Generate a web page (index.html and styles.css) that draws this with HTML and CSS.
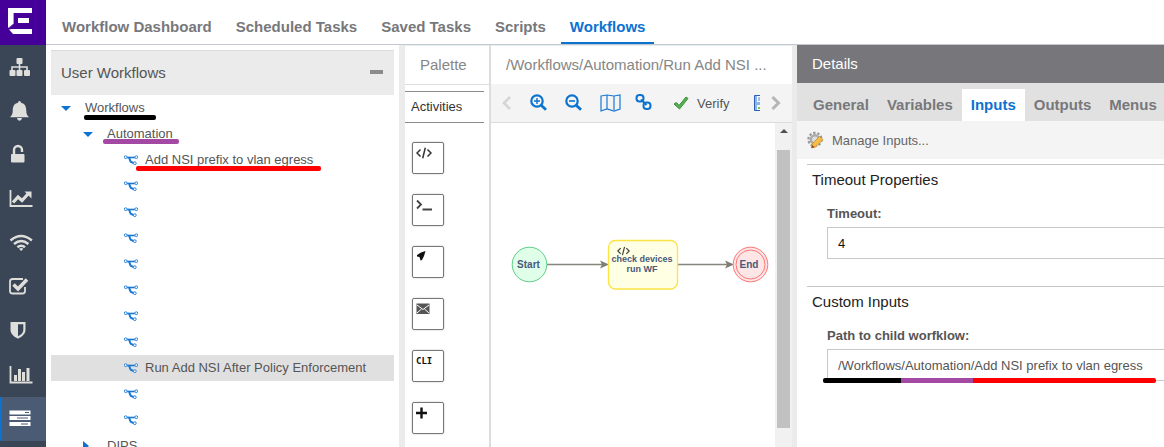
FILE: index.html
```html
<!DOCTYPE html>
<html lang="en">
<head>
<meta charset="utf-8">
<title>Workflows</title>
<link rel="stylesheet" href="styles.css">
</head>
<body>
<svg class="defs" aria-hidden="true">
  <symbol id="flow" viewBox="0 0 14 10">
    <g fill="none" stroke="#1a78d2">
      <path d="M3 2.500h8" stroke-width="1.600"/>
      <path d="M4.600 2.500C6 3 5.500 5.500 7 7L9.500 8" stroke-width="2"/>
      <circle cx="1.700" cy="2.200" r="1.400" fill="#fff" stroke-width=".9"/>
      <circle cx="12.300" cy="2.200" r="1.400" fill="#fff" stroke-width=".9"/>
      <circle cx="10.800" cy="8.200" r="1.400" fill="#fff" stroke-width=".9"/>
    </g>
  </symbol>
  <symbol id="code" viewBox="0 0 16 12">
    <path d="M4.500 2.500 1 6l3.500 3.500M11.500 2.500 15 6l-3.500 3.500M9.300.8 6.700 11.200" fill="none" stroke="currentColor" stroke-width="1.500"/>
  </symbol>
</svg>
<div class="app">
  <nav class="rail" aria-label="Main">
    <a class="logo" href="#" aria-label="Home">
      <svg width="46" height="45" viewBox="0 0 46 45"><path fill="#fff" d="M8 8h24v5H13v11l-5 4zM18 18h11v5H18zM9 29.500 12 29h20v5H13z"/><path fill="#b79bdc" d="M13 13h1v10.500l-4.500 4.500H9l4-4z"/></svg>
    </a>
    <a class="rail-item" href="#" aria-label="Network"><svg width="24" height="24" viewBox="0 0 24 24"><g fill="#dededb"><rect x="7.500" y="3" width="6" height="6" rx="1"/><rect x=".5" y="15" width="6" height="6" rx="1"/><rect x="7.500" y="15" width="6" height="6" rx="1"/><rect x="15" y="15" width="6" height="6" rx="1"/></g><path d="M3 15v-3h15v3M10.500 8v8" fill="none" stroke="#dededb" stroke-width="1.600"/></svg></a>
    <a class="rail-item" href="#" aria-label="Alarms"><svg width="24" height="24" viewBox="0 0 24 24"><path fill="#dededb" d="M10.500 2q1.500 0 1.500 1.800c4 .8 5.300 4 5.300 8 0 3 .6 4.200 2.700 6.400H1c2.100-2.200 2.700-3.400 2.700-6.400 0-4 1.300-7.200 5.300-8Q9 2 10.500 2zM8 19h5q-.4 2.800-2.500 2.800T8 19z"/></svg></a>
    <a class="rail-item" href="#" aria-label="Access"><svg width="24" height="24" viewBox="0 0 24 24"><rect x="2" y="11" width="13.500" height="8.500" rx="1" fill="#dededb"/><path d="M5 11V7a4 4 0 0 1 8 0V9" fill="none" stroke="#dededb" stroke-width="2.400"/></svg></a>
    <a class="rail-item" href="#" aria-label="Reports"><svg width="24" height="24" viewBox="0 0 24 24"><path d="M1.500 3v16h22" fill="none" stroke="#dededb" stroke-width="1.800"/><path d="M4 15.500 9 10l4 3.500 6-6.500" fill="none" stroke="#dededb" stroke-width="3.200"/><path d="M15.500 4.500h7v7z" fill="#dededb"/></svg></a>
    <a class="rail-item" href="#" aria-label="Wireless"><svg width="24" height="24" viewBox="0 0 24 24"><g fill="none" stroke="#dededb" stroke-width="2.500"><path d="M1.500 9.500q10.500-9 21.400 0"/><path d="M5 13q7.200-6 14.400 0"/><path d="M8.400 16.300q3.800-3.200 7.600 0"/></g><path d="m10 17.800q2.200-1.500 4.400 0L12.200 20z" fill="#dededb"/></svg></a>
    <a class="rail-item" href="#" aria-label="Compliance"><svg width="24" height="24" viewBox="0 0 24 24"><path d="M14 4H3.500Q1 4 1 6.500v9.500Q1 18.500 3.500 18.500h10q2.500 0 2.500-2.500v-4" fill="none" stroke="#dededb" stroke-width="1.800"/><path d="m4.500 9.500 4.500 4.500 9-9.500" fill="none" stroke="#dededb" stroke-width="3.600"/></svg></a>
    <a class="rail-item" href="#" aria-label="Security"><svg width="24" height="24" viewBox="0 0 24 24"><path fill="#dededb" fill-rule="evenodd" d="M1.500 3h15v8c0 3.500-3 6.500-7.500 8.700C4.500 17.500 1.500 14.500 1.500 11zM9 5.200v12c3-1.500 5.300-3.500 5.300-6V5.200z"/></svg></a>
    <a class="rail-item" href="#" aria-label="Analytics"><svg width="24" height="24" viewBox="0 0 24 24"><path d="M1.500 3v16.500h22" fill="none" stroke="#dededb" stroke-width="1.800"/><path fill="#dededb" d="M5 12h3v6H5zM9 6h3v12H9zM13 9h3v9h-3zM17.500 5h3v13h-3z"/></svg></a>
    <a class="rail-item active" href="#" aria-label="Tasks" aria-current="page"><svg width="24" height="24" viewBox="0 0 24 24"><path fill="#fff" d="M.5 3.500h21v4H.5zM.5 9h21v4H.5zM.5 15h21v4H.5z"/><path d="M16 5.500h4M8 11h11M12 17h7" stroke="#4b5b74"/></svg></a>
  </nav>

  <div class="page">
    <nav class="tabs" aria-label="Sections">
      <a href="#">Workflow Dashboard</a>
      <a href="#">Scheduled Tasks</a>
      <a href="#">Saved Tasks</a>
      <a href="#">Scripts</a>
      <a class="active" href="#" aria-current="page">Workflows</a>
    </nav>

    <main class="work">
      <section class="tree-panel">
        <header class="tree-head"><h2>User Workflows</h2><button class="collapse" aria-label="Collapse"></button></header>
        <ul class="tree">
          <li class="level-1"><span class="caret"></span><span class="label mark mark-black">Workflows</span></li>
          <li class="level-2"><span class="caret"></span><span class="label mark mark-purple">Automation</span></li>
          <li class="level-3"><svg class="flow"><use href="#flow"/></svg><span class="label mark mark-red">Add NSI prefix to vlan egress</span></li>
          <li class="level-3"><svg class="flow"><use href="#flow"/></svg></li>
          <li class="level-3"><svg class="flow"><use href="#flow"/></svg></li>
          <li class="level-3"><svg class="flow"><use href="#flow"/></svg></li>
          <li class="level-3"><svg class="flow"><use href="#flow"/></svg></li>
          <li class="level-3"><svg class="flow"><use href="#flow"/></svg></li>
          <li class="level-3"><svg class="flow"><use href="#flow"/></svg></li>
          <li class="level-3"><svg class="flow"><use href="#flow"/></svg></li>
          <li class="level-3 selected"><svg class="flow"><use href="#flow"/></svg><span class="label">Run Add NSI After Policy Enforcement</span></li>
          <li class="level-3"><svg class="flow"><use href="#flow"/></svg></li>
          <li class="level-3"><svg class="flow"><use href="#flow"/></svg></li>
          <li class="level-2"><span class="caret closed"></span><span class="label">DIPS</span></li>
        </ul>
      </section>

      <section class="palette">
        <h2 class="pane-title">Palette</h2>
        <h3 class="group">Activities</h3>
        <div class="tools">
          <button aria-label="Script"><svg width="16" height="12"><use href="#code"/></svg></button>
          <button aria-label="Shell"><svg width="16" height="12" viewBox="0 0 16 12"><path d="m1 1.500 4 4-4 4M6.500 10.500H16" fill="none" stroke="#444" stroke-width="1.800"/></svg></button>
          <button aria-label="Launch"><svg width="16" height="12" viewBox="0 0 16 12"><path d="M9.500 0 5 1.500 1 4v1.500l2.500.5L4 7.500l.5 2L6 9l2-4z" fill="#111"/></svg></button>
          <button aria-label="Mail"><svg width="16" height="12" viewBox="0 0 16 12"><path d="M.5.500h13v10.500H.5z" fill="#555"/><path d="m1 2 6 4.500L13 2M1 10l4.500-4M13 10 8.500 6" fill="none" stroke="#fff"/></svg></button>
          <button class="cli">CLI</button>
          <button aria-label="Add"><svg width="16" height="12" viewBox="0 0 16 12"><path d="M0 6h11M5.500.5v11" stroke="#111" stroke-width="2.400"/></svg></button>
        </div>
      </section>

      <section class="editor">
        <h2 class="pane-title path">/Workflows/Automation/Run Add NSI ...</h2>
        <div class="toolbar">
          <button aria-label="Scroll left"><svg width="12" height="16" viewBox="0 0 12 16"><path d="M9 2 3 8l6 6" fill="none" stroke="#d6d6d6" stroke-width="2.800"/></svg></button>
          <button class="zoom-in" aria-label="Zoom in"><svg width="18" height="18" viewBox="0 0 18 18"><g fill="none" stroke="#0c72d0"><circle cx="7" cy="7" r="5.700" stroke-width="2.200"/><path d="m11.200 11.200 4.800 4.600" stroke-width="2.800"/><path d="M4 7h6M7 4v6" stroke-width="1.400"/></g></svg></button>
          <button class="zoom-out" aria-label="Zoom out"><svg width="18" height="18" viewBox="0 0 18 18"><g fill="none" stroke="#0c72d0"><circle cx="7" cy="7" r="5.700" stroke-width="2.200"/><path d="m11.200 11.200 4.800 4.600" stroke-width="2.800"/><path d="M4 7h6" stroke-width="1.600"/></g></svg></button>
          <button class="map" aria-label="Map"><svg width="22" height="18" viewBox="0 0 22 18"><path d="m1 2 6-1 7 1 6-1v14l-6 2-7-2-6 2zM7 1v14M14 2v14" fill="none" stroke="#1a78d2" stroke-width="1.200"/></svg></button>
          <button class="link" aria-label="Link"><svg width="18" height="18" viewBox="0 0 18 18"><g fill="none" stroke="#0c72d0" stroke-width="2"><rect x="1.500" y="1" width="7" height="6.500" rx="3"/><rect x="8.500" y="8.500" width="7" height="6.500" rx="3"/><path d="m6 5.500 5.500 5.500"/></g></svg></button>
          <button class="verify"><svg width="16" height="14" viewBox="0 0 16 14"><path d="m1 8 2.500-1.500L6 9.500 13 1l2 1.500L6.500 13z" fill="#57b250" stroke="#3b8c3d"/></svg>Verify</button>
          <button class="save" aria-label="Save"><svg width="6" height="16" viewBox="0 0 6 16"><path d="M.5.5H8v15H.5z" fill="#8db5ed" stroke="#2f60b5"/><path d="M3 1h3v6H3zM3 10h3v5H3z" fill="#fff"/><path d="M4 3h2M4 5h2" stroke="#557eb7"/><path d="M4 12h2v2H4z" fill="#7ac943"/></svg></button>
          <button class="more" aria-label="Scroll right"><svg width="12" height="16" viewBox="0 0 12 16"><path d="m2.500 2 6 6-6 6" fill="none" stroke="#b5b5b5" stroke-width="3"/></svg></button>
        </div>
        <div class="canvas">
          <svg class="diagram" width="284" height="240" viewBox="491 123 284 240" role="img" aria-label="Workflow diagram">
            <g stroke="#85857b" stroke-width="1.500"><path d="M547 264.500h56M678 264.500h50"/></g>
            <path d="M600 260.500l9 4-9 4 2-4zM725 260.500l9 4-9 4 2-4z" fill="#7d7d73"/>
            <circle cx="529.500" cy="264.500" r="17.300" fill="#e0ffe9" stroke="#5fcb88"/>
            <rect x="608.500" y="240.500" width="69" height="48.500" rx="7" fill="#ffffe3" stroke="#fbe344" stroke-width="1.300"/>
            <circle cx="750.500" cy="264.500" r="17.300" fill="#ffe6e6" stroke="#ff7474"/>
            <circle cx="750.500" cy="264.500" r="14.500" fill="#ffe6e6" stroke="#ff7474"/>
            <use href="#code" x="617" y="246" width="13" height="10" color="#444"/>
            <g class="node-text">
              <text class="big" x="528.500" y="268">Start</text>
              <text x="642" y="262">check devices</text>
              <text x="642" y="272">run WF</text>
              <text class="big" x="749" y="268">End</text>
            </g>
          </svg>
          <div class="scrollbar"><span class="arrow"></span><span class="thumb"></span></div>
        </div>
      </section>

      <section class="details">
        <h2 class="details-head">Details</h2>
        <div class="detail-tabs" role="tablist">
          <button role="tab">General</button>
          <button role="tab">Variables</button>
          <button role="tab" class="active" aria-selected="true">Inputs</button>
          <button role="tab">Outputs</button>
          <button role="tab">Menus</button>
        </div>
        <div class="manage">
          <button><svg width="18" height="18" viewBox="0 0 18 18"><circle cx="8" cy="8.500" r="6.600" fill="none" stroke="#999" stroke-width="2.200" stroke-dasharray="2.400 1.750"/><circle cx="8" cy="8.500" r="4.200" fill="#ddd" stroke="#aaa" stroke-width="2.500"/><path d="m5 13 7.500-7.500 3.500 3L8.500 16 4.500 17z" fill="#f6bd45" stroke="#c98a2a" stroke-width=".8"/><path d="m4.500 17 .7-3 2.500 2.200z" fill="#8f4a1f"/></svg>Manage Inputs...</button>
        </div>
        <form class="form">
          <fieldset>
            <h3>Timeout Properties</h3>
            <label for="timeout">Timeout:</label>
            <div class="field"><input id="timeout" class="dark" type="text" value="4"></div>
          </fieldset>
          <fieldset>
            <h3>Custom Inputs</h3>
            <label for="child">Path to child worfklow:</label>
            <div class="field"><input id="child" type="text" value="/Workflows/Automation/Add NSI prefix to vlan egress"><span class="path-mark"></span></div>
          </fieldset>
        </form>
      </section>
    </main>
  </div>
</div>
</body>
</html>
```

FILE: styles.css
```css
* { box-sizing: border-box; }
body {
  margin: 0;
  background: #fff;
  color: #555;
  font-family: "Liberation Sans", Arial, sans-serif;
  font-size: 13px;
}
h2, h3, ul, fieldset { margin: 0; padding: 0; border: 0; font-weight: normal; }
button {
  margin: 0;
  padding: 0;
  border: 0;
  background: none;
  color: inherit;
  font: inherit;
}
a { color: inherit; text-decoration: none; }
svg { display: block; flex: none; }
.defs { position: absolute; width: 0; height: 0; }

.app { display: flex; height: 100vh; overflow: hidden; }

/* Left icon rail */
.rail { display: flex; flex-direction: column; flex: none; width: 46px; background: #3a4555; }
.logo { flex: none; background: #440099; }
.rail-item {
  display: flex;
  align-items: center;
  flex: none;
  height: 44px;
  padding-left: 9px;
}
.rail-item.active { padding-left: 7px; border-left: 2px solid #0c72d0; background: #4b5b74; }

/* Top tabs */
.page { display: flex; flex-direction: column; flex: 1; min-width: 0; }
.tabs {
  display: flex;
  flex: none;
  gap: 6px;
  height: 45px;
  padding-left: 7px;
  border-bottom: 1px solid #c5c9cf;
  color: #77787b;
  font-size: 15px;
  font-weight: bold;
  line-height: 18px;
}
.tabs a { height: 44px; padding: 18px 9px 0; white-space: nowrap; }
.tabs .active { border-bottom: 2px solid #0c72d0; color: #0c72d0; }

.work { display: flex; flex: 1; min-height: 0; }

/* Workflow tree */
.tree-panel { flex: none; width: 359px; padding: 5px 5px 0; border-right: 6px solid #ebebeb; }
.tree-head {
  display: flex;
  align-items: center;
  justify-content: space-between;
  height: 45px;
  padding: 0 11px 2px 10px;
  border-top: 1px solid #dcdcdc;
  background: #ebebeb;
}
.tree-head h2 { font-size: 15px; }
.collapse { width: 13px; height: 4px; background: #8c8c8c; }
.tree { list-style: none; }
.tree li { display: flex; align-items: center; height: 26px; }
.tree .selected { background: #e0e0e0; }
.level-1 { padding-left: 10px; }
.level-2 { padding-left: 32px; }
.level-3 { padding-left: 73px; }
.caret { width: 10px; margin-right: 14px; border: 5px solid transparent; border-top-color: #0c72d0; border-bottom: 0; }
.caret.closed { border: 5px solid transparent; border-left: 6px solid #0c72d0; border-right: 0; }
.flow { width: 14px; height: 10px; margin-right: 7px; }
.label { position: relative; margin-top: -1px; line-height: 16px; white-space: nowrap; }
.mark::after { content: ""; position: absolute; height: 5px; border-radius: 2px; }
.mark-black::after { left: -1px; right: -11px; top: 15px; background: #000; }
.mark-purple::after { left: -4px; right: -6px; top: 13px; background: #a349a4; }
.mark-red::after { left: -9px; right: -8px; top: 14px; background: #f00; }

/* Palette */
.pane-title {
  height: 40px;
  padding-left: 15px;
  border-bottom: 1px solid #ddd;
  border-top: 1px solid #e3eff1;
  color: #868686;
  font-size: 15px;
  line-height: 38px;
  white-space: nowrap;
}
.palette { flex: none; width: 86px; border-right: 2px solid #ddd; }
.group {
  height: 32px;
  margin: 6px 5px 0 0;
  padding-left: 6px;
  border: solid #8c8c8c;
  border-width: 1px 0;
  color: #333;
  font-size: 13px;
  line-height: 29px;
}
.tools { display: flex; flex-direction: column; gap: 20px; padding: 19px 0 0 7px; }
.tools button {
  display: flex;
  width: 32px;
  height: 32px;
  flex: none;
  padding: 4px 0 0 3px;
  border: 1px solid #777;
  border-radius: 2px;
  box-shadow: 0 0 2px #bbb;
  color: #333;
}
.tools .cli { color: #111; font: bold 9px/13px "DejaVu Sans Mono", monospace; }

/* Editor */
.editor { display: flex; flex-direction: column; flex: 301 1 0; min-width: 0; border-right: 5px solid #ebebeb; }
.pane-title.path { flex: none; height: 39px; border-bottom: 0; overflow: hidden; }
.toolbar {
  display: flex;
  align-items: center;
  flex: none;
  height: 39px;
  padding: 0 10px;
  border-bottom: 1px solid #dcdcdc;
  background: #f4f4f4;
}
.zoom-in, .zoom-out, .map { margin-left: 17px; }
.link { margin-left: 13px; }
.verify { display: flex; align-items: center; gap: 8px; margin-left: 20px; }
.save { margin-left: 24px; }
.more { margin-left: auto; }
.canvas { display: flex; justify-content: space-between; flex: 1; min-height: 0; }
.node-text { fill: #48597d; font-size: 9px; font-weight: bold; text-anchor: middle; }
.node-text .big { font-size: 10px; }
.scrollbar { display: flex; flex-direction: column; align-items: center; flex: none; width: 17px; padding: 6px 2px 19px; background: #f1f1f1; }
.arrow { border: 4px solid transparent; border-top: 0; border-bottom-color: #505050; }
.thumb { flex: 1; width: 13px; margin-top: 17px; background: #c1c1c1; }

/* Details */
.details { flex: 367 1 0; min-width: 0; overflow: hidden; }
.details-head { height: 38px; padding-left: 15px; background: #77777b; color: #fff; font-size: 15px; line-height: 38px; }
.detail-tabs { display: flex; height: 38px; padding: 6px 0 0 7px; background: #e1e1e1; color: #77787b; font-size: 15px; font-weight: bold; }
.detail-tabs button { flex: none; padding: 0 9px 2px; }
.detail-tabs .active { background: #fff; color: #0c72d0; }
.manage { display: flex; height: 38px; padding-left: 10px; background: #f4f4f4; color: #666; }
.manage button { display: flex; align-items: center; gap: 7px; }
.form { padding: 5px 0 0 10px; }
.form fieldset { height: 122px; padding-left: 20px; border-top: 1px solid #c5c5c5; }
.form h3 { margin-left: -15px; padding-top: 6px; color: #222; font-size: 15px; line-height: 18px; }
.form label { display: block; padding-top: 17px; font-weight: bold; line-height: 16px; }
.field { position: relative; padding-top: 5px; }
.field input {
  display: block;
  width: 100%;
  height: 32px;
  padding: 0 10px;
  border: 1px solid #c8c8c8;
  border-right: 0;
  color: #555;
  font: inherit;
}
.field .dark { color: #111; }
.path-mark {
  position: absolute;
  left: -4px;
  bottom: -2px;
  width: 333px;
  height: 5px;
  border-radius: 2px;
  background: linear-gradient(to right, #000 78px, #a349a4 78px 150px, #f00 150px);
}
```
